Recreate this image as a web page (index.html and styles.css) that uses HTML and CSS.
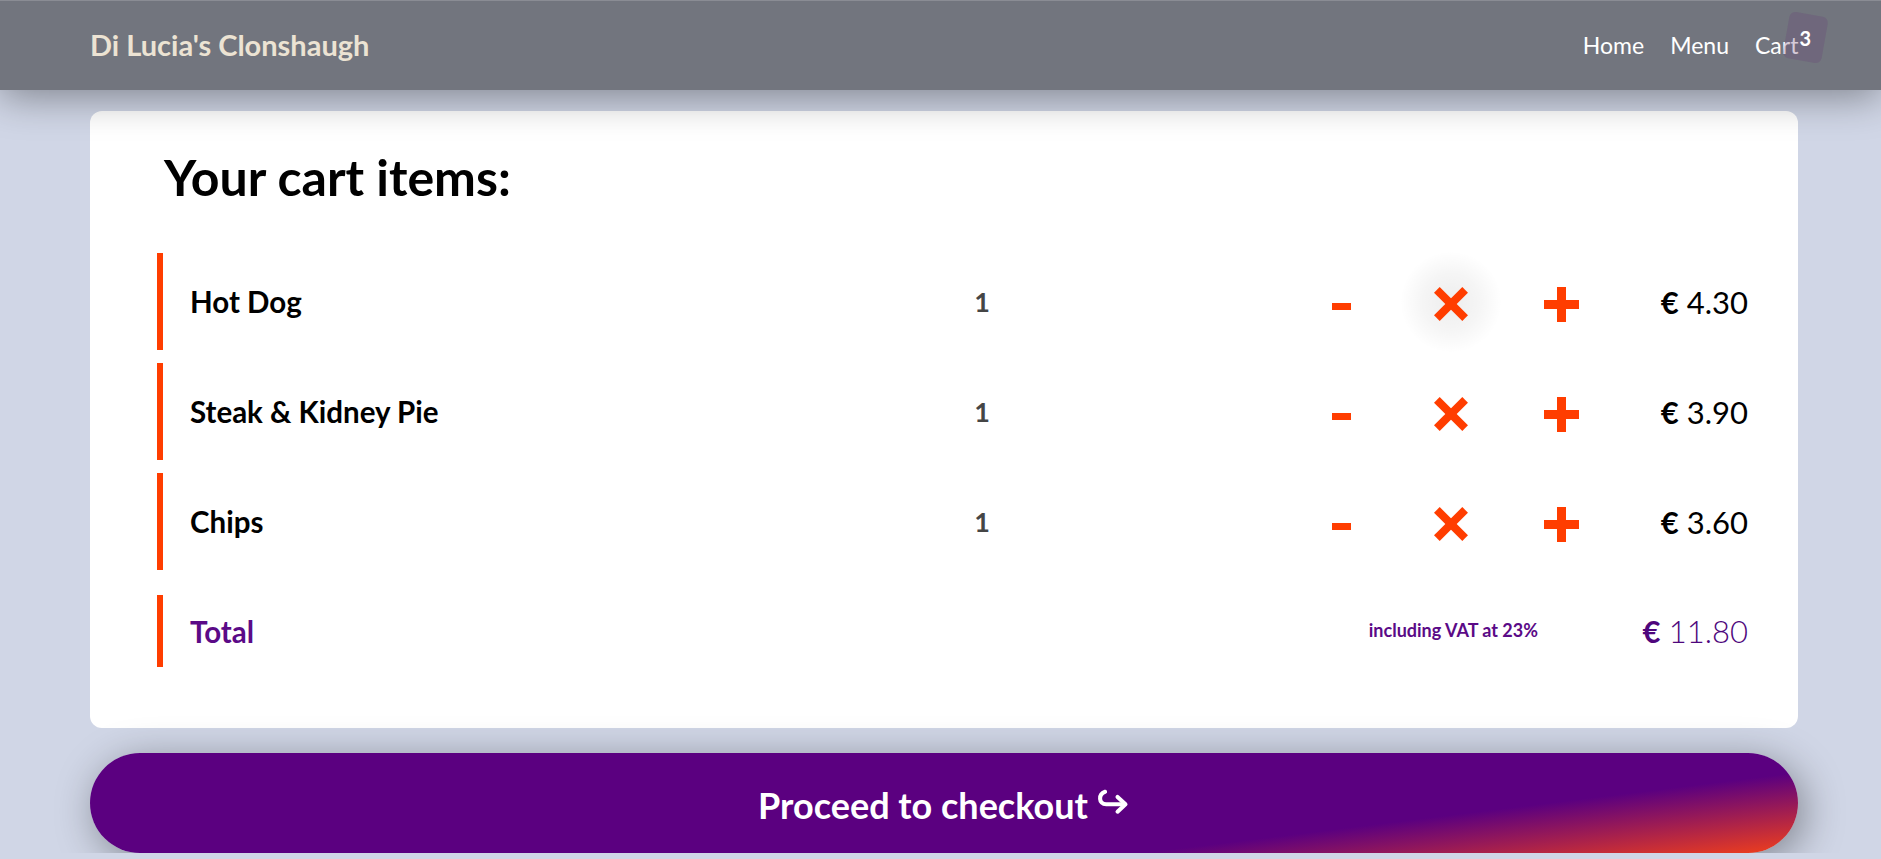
FILE: index.html
```html
<!DOCTYPE html>
<html lang="en">
<head>
<meta charset="utf-8">
<title>Di Lucia's Clonshaugh – Cart</title>
<link rel="stylesheet" href="styles.css">
</head>
<body>
<header class="topbar">
  <a class="brand" href="#">Di Lucia's Clonshaugh</a>
  <nav class="nav">
    <a href="#">Home</a>
    <a href="#">Menu</a>
    <a href="#" class="cart-link">Cart<span class="badge-bg"></span><sup class="badge">3</sup></a>
  </nav>
</header>

<main class="page">
  <section class="card">
    <h1 class="title">Your cart items:</h1>
    <ul class="rows">
      <li class="row">
        <span class="name">Hot Dog</span>
        <span class="qty">1</span>
        <span class="spacer"></span>
        <div class="controls">
          <button class="ctl minus" aria-label="decrease"><svg width="19" height="7" viewBox="0 0 19 7"><rect width="19" height="7" fill="#ff3d00"/></svg></button>
          <button class="ctl remove glow" aria-label="remove"><svg width="34" height="34" viewBox="0 0 34 34"><g fill="#ff3d00" transform="rotate(45 17 17)"><rect x="-3" y="13" width="40" height="8"/><rect x="13" y="-3" width="8" height="40"/></g></svg></button>
          <button class="ctl plus" aria-label="increase"><svg width="35" height="35" viewBox="0 0 35 35"><g fill="#ff3d00"><rect x="0" y="13" width="35" height="9"/><rect x="13" y="0" width="9" height="35"/></g></svg></button>
        </div>
        <span class="price"><b>€</b> 4.30</span>
      </li>
      <li class="row">
        <span class="name">Steak &amp; Kidney Pie</span>
        <span class="qty">1</span>
        <span class="spacer"></span>
        <div class="controls">
          <button class="ctl minus" aria-label="decrease"><svg width="19" height="7" viewBox="0 0 19 7"><rect width="19" height="7" fill="#ff3d00"/></svg></button>
          <button class="ctl remove" aria-label="remove"><svg width="34" height="34" viewBox="0 0 34 34"><g fill="#ff3d00" transform="rotate(45 17 17)"><rect x="-3" y="13" width="40" height="8"/><rect x="13" y="-3" width="8" height="40"/></g></svg></button>
          <button class="ctl plus" aria-label="increase"><svg width="35" height="35" viewBox="0 0 35 35"><g fill="#ff3d00"><rect x="0" y="13" width="35" height="9"/><rect x="13" y="0" width="9" height="35"/></g></svg></button>
        </div>
        <span class="price"><b>€</b> 3.90</span>
      </li>
      <li class="row">
        <span class="name">Chips</span>
        <span class="qty">1</span>
        <span class="spacer"></span>
        <div class="controls">
          <button class="ctl minus" aria-label="decrease"><svg width="19" height="7" viewBox="0 0 19 7"><rect width="19" height="7" fill="#ff3d00"/></svg></button>
          <button class="ctl remove" aria-label="remove"><svg width="34" height="34" viewBox="0 0 34 34"><g fill="#ff3d00" transform="rotate(45 17 17)"><rect x="-3" y="13" width="40" height="8"/><rect x="13" y="-3" width="8" height="40"/></g></svg></button>
          <button class="ctl plus" aria-label="increase"><svg width="35" height="35" viewBox="0 0 35 35"><g fill="#ff3d00"><rect x="0" y="13" width="35" height="9"/><rect x="13" y="0" width="9" height="35"/></g></svg></button>
        </div>
        <span class="price"><b>€</b> 3.60</span>
      </li>
      <li class="row total">
        <span class="name">Total</span>
        <span class="vat">including VAT at 23%</span>
        <span class="price"><b>€</b> 11.80</span>
      </li>
    </ul>
  </section>

  <button class="checkout">Proceed to checkout <svg class="arrow" width="34" height="28" viewBox="0 0 30 24"><path d="M8 3 C2 5 2 14 9 14 L25 14" fill="none" stroke="#fff" stroke-width="3.6" stroke-linecap="round"/><path d="M19 7.5 L26 14 L19 20.5" fill="none" stroke="#fff" stroke-width="3.6" stroke-linecap="round" stroke-linejoin="round"/></svg></button>
</main>
</body>
</html>
```

FILE: styles.css
```css
* { box-sizing: border-box; }

html, body {
  margin: 0;
  padding: 0;
}

body {
  background: #d0d6e6;
  font-family: Lato, "Noto Sans", "Liberation Sans", sans-serif;
  color: #000;
  overflow: hidden;
}

a { text-decoration: none; }

.topbar {
  position: relative;
  z-index: 2;
  height: 90px;
  background: #72757e;
  border-top: 1px solid #8a8c94;
  box-shadow: 0 6px 40px rgba(0, 0, 0, 0.4);
  display: flex;
  align-items: center;
  justify-content: space-between;
  padding: 0 70px 0 90px;
}

.brand {
  color: #ece3d3;
  font-weight: 700;
  font-size: 29px;
  margin-top: -3px;
}

.nav {
  display: flex;
  gap: 26px;
  align-items: center;
  margin-top: -2px;
}

.nav a {
  color: #fff;
  font-size: 23px;
}

.cart-link {
  position: relative;
}

.badge-bg {
  position: absolute;
  left: 31px;
  top: -17px;
  width: 39px;
  height: 47px;
  border-radius: 6px;
  background: rgba(105, 70, 120, 0.28);
  transform: rotate(10deg);
}

.badge {
  position: relative;
  font-weight: 700;
  font-size: 20px;
  color: #fff;
  vertical-align: 8px;
  line-height: 0;
  margin-left: 1px;
}

.page {
  padding: 21px 83px 0 90px;
}

.card {
  background: #fff;
  border-radius: 12px;
  padding: 36px 50px 61px 67px;
}

.title {
  margin: 0 0 46px 7px;
  font-size: 50px;
  line-height: 1.2;
  font-weight: 700;
}

.rows {
  list-style: none;
  margin: 0;
  padding: 0;
  display: flex;
  flex-direction: column;
  gap: 13px;
}

.row {
  height: 97px;
  border-left: 6px solid #ff3d00;
  padding-left: 27px;
  display: grid;
  grid-template-columns: 762px 60px 1fr auto 130px;
  align-items: center;
}

.name {
  font-size: 29.5px;
  font-weight: 700;
}

.qty {
  text-align: center;
  font-size: 27px;
  font-weight: 700;
  color: #454545;
}

.controls {
  display: flex;
  gap: 50px;
  margin-right: 27px;
}

.ctl {
  width: 60px;
  height: 60px;
  border: 0;
  padding: 0;
  background: transparent;
  display: flex;
  align-items: center;
  justify-content: center;
  border-radius: 50%;
}

.ctl.minus svg { margin-top: 10px; }
.ctl.remove svg { margin-top: 5px; }
.ctl.plus svg { margin-top: 5px; }

.ctl.glow {
  background: radial-gradient(circle, rgba(0,0,0,0.07) 0%, rgba(0,0,0,0.04) 40%, rgba(0,0,0,0) 72%);
  width: 100px;
  height: 100px;
  margin: -20px;
}

.price {
  text-align: right;
  font-size: 31px;
  font-weight: 400;
  white-space: nowrap;
}

.price b { font-weight: 700; }

.row.total {
  height: 72px;
  margin-top: 12px;
  display: flex;
  align-items: center;
  color: #5b0a87;
}

.row.total .name {
  flex: 1;
}

.vat {
  font-size: 18px;
  font-weight: 700;
  margin-right: 80px;
  margin-top: -2px;
}

.row.total .price {
  width: 130px;
  font-weight: 300;
  color: #4e067c;
}

.checkout {
  display: flex;
  align-items: center;
  justify-content: center;
  gap: 8px;
  width: 100%;
  height: 100px;
  margin-top: 25px;
  padding-top: 4px;
  border: 0;
  border-radius: 50px;
  background: linear-gradient(173deg, #5b0080 0%, #5b0080 74%, #f2401a 100%);
  color: #fff;
  font-family: Lato, "Noto Sans", sans-serif;
  font-size: 36px;
  font-weight: 700;
  box-shadow: 6px 8px 40px rgba(0, 0, 0, 0.38);
}

.arrow {
  margin-top: -6px;
}
```
